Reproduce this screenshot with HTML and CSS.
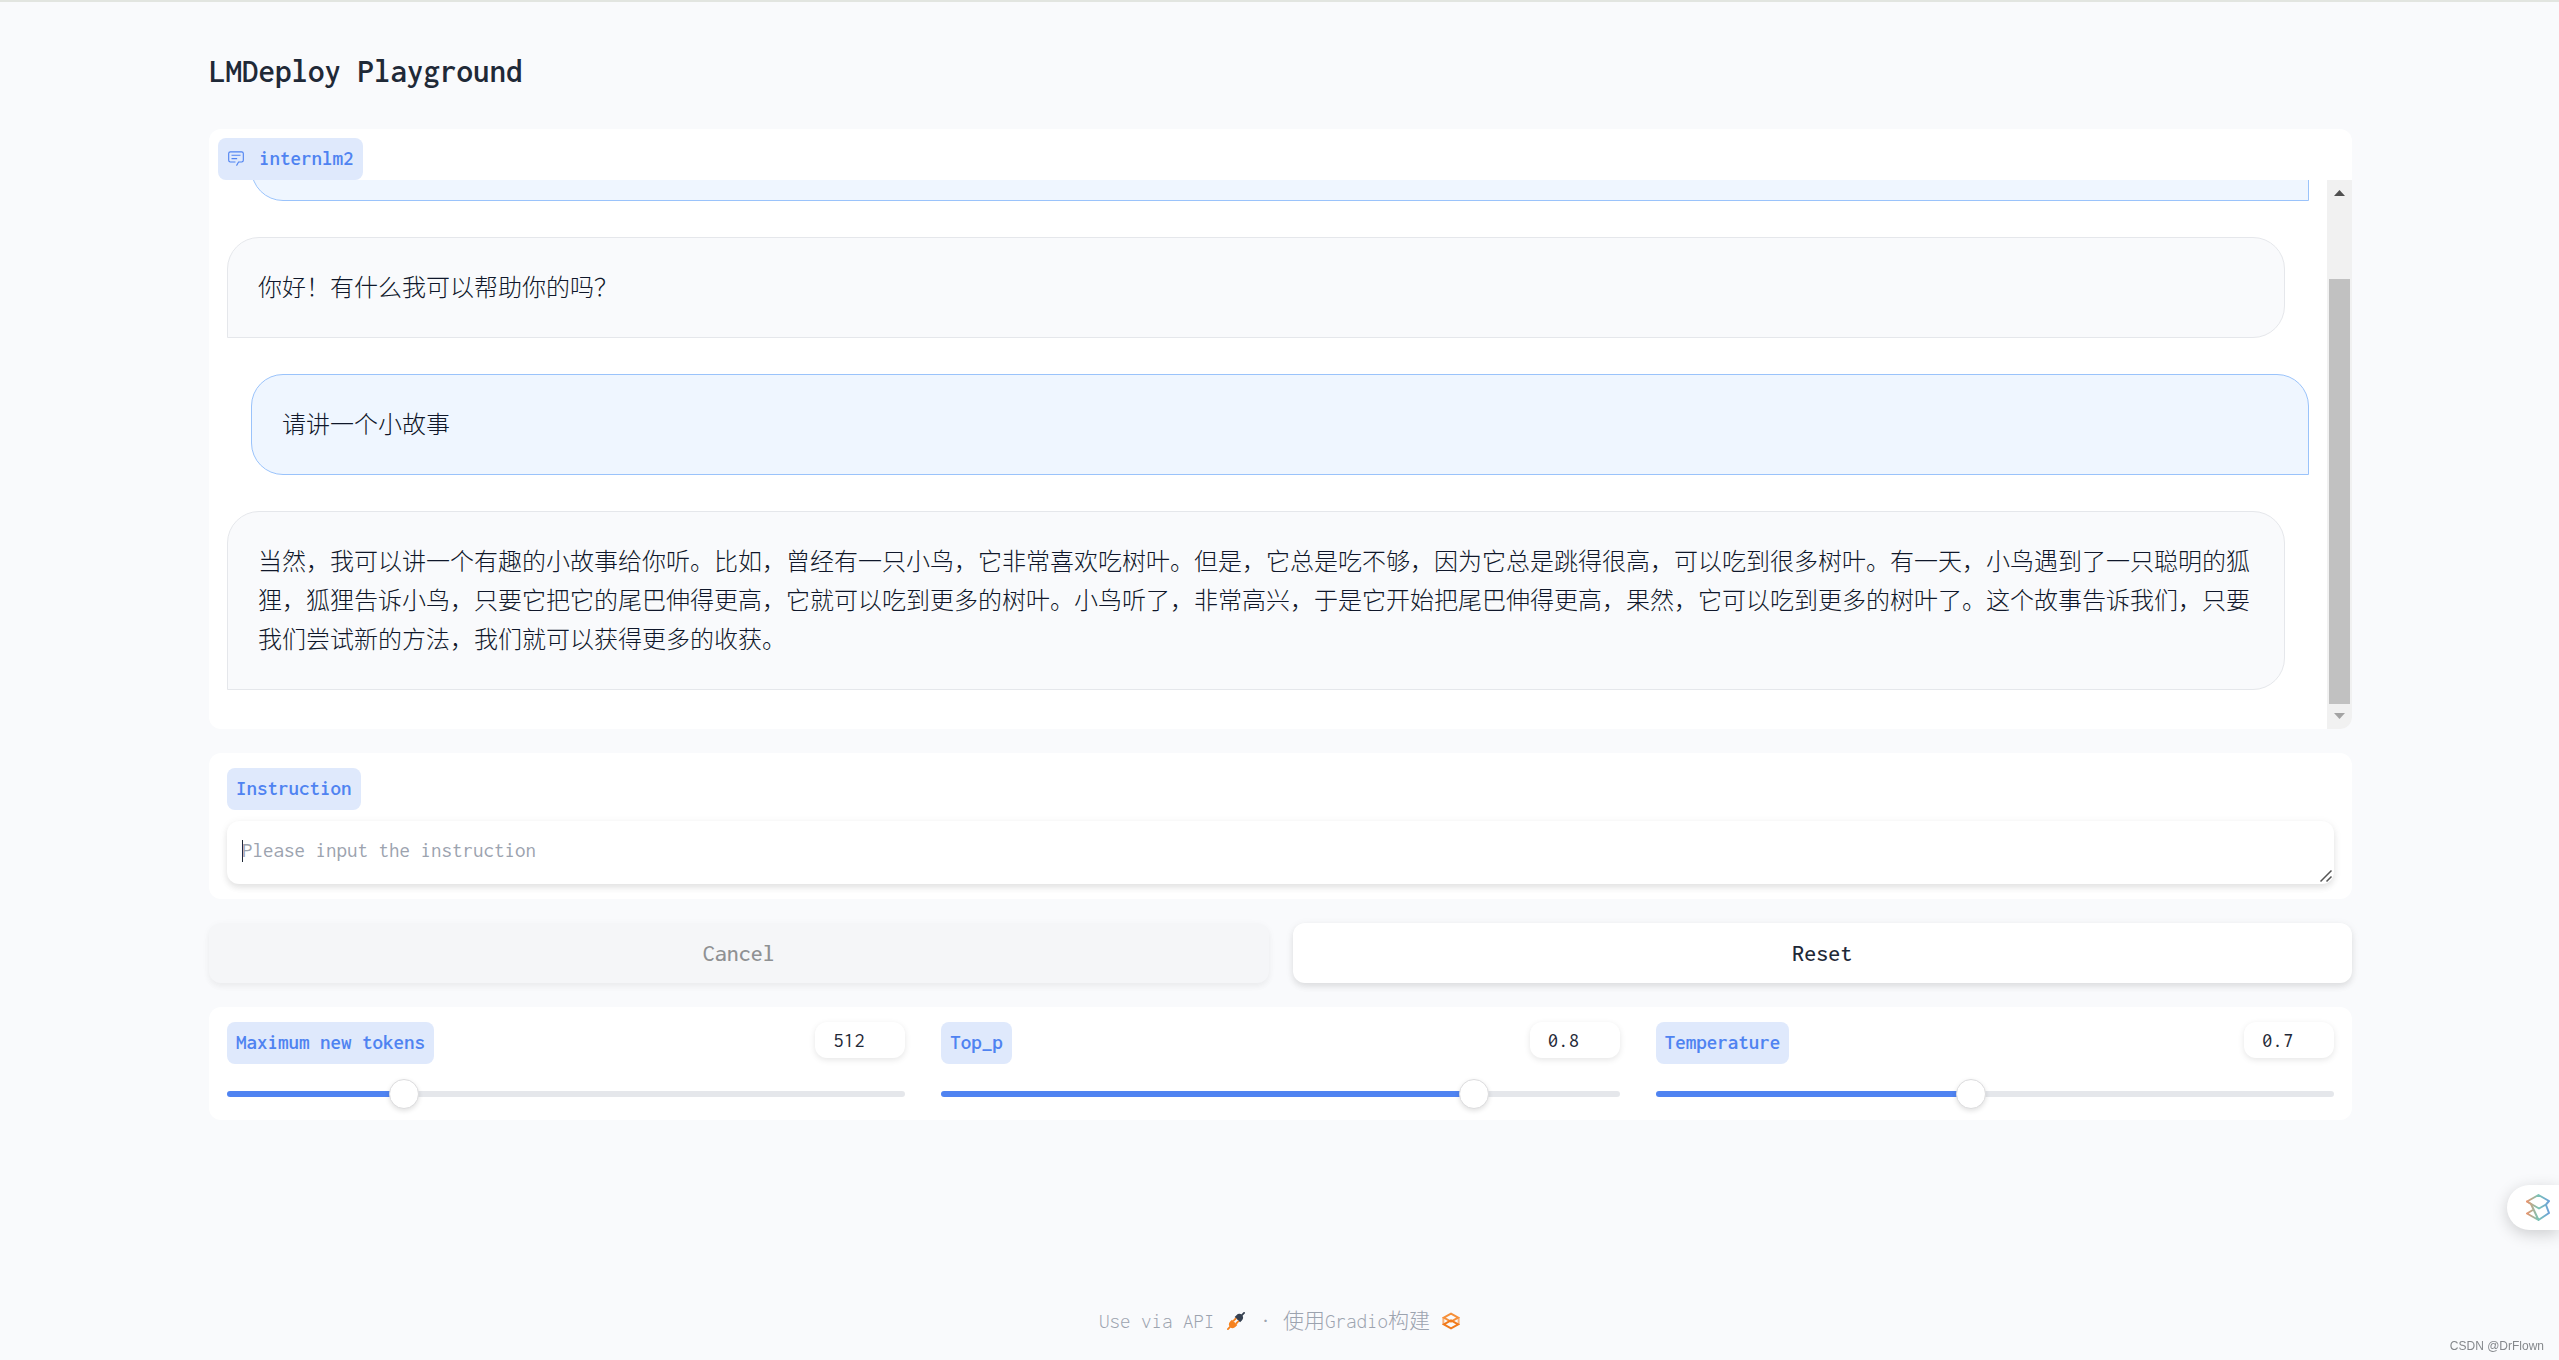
FILE: index.html
```html
<!DOCTYPE html>
<html lang="zh-CN">
<head>
<meta charset="utf-8">
<meta name="viewport" content="width=device-width, initial-scale=1">
<title>LMDeploy Playground</title>
<link rel="stylesheet" href="styles.css">
</head>
<body>
<div class="app">
  <main class="main">
    <h1 class="title">LMDeploy Playground</h1>

    <section class="panel chat">
      <h2 class="chip chat-label">
        <svg class="chat-icon" viewBox="0 0 32 32" fill="currentColor" aria-hidden="true">
          <path d="M17.740 30 16 29l4-7h6a2 2 0 0 0 2-2V8a2 2 0 0 0-2-2H6a2 2 0 0 0-2 2v12a2 2 0 0 0 2 2h9v2H6a4 4 0 0 1-4-4V8a4 4 0 0 1 4-4h20a4 4 0 0 1 4 4v12a4 4 0 0 1-4 4h-4.840z"/>
          <path d="M8 10h16v2H8zM8 16h10v2H8z"/>
        </svg>
        internlm2
      </h2>
      <div class="chat-body">
        <div class="messages">
          <div class="message-list">
            <p class="message user"></p>
            <p class="message bot">你好！有什么我可以帮助你的吗？</p>
            <p class="message user">请讲一个小故事</p>
            <p class="message bot">当然，我可以讲一个有趣的小故事给你听。比如，曾经有一只小鸟，它非常喜欢吃树叶。但是，它总是吃不够，因为它总是跳得很高，可以吃到很多树叶。有一天，小鸟遇到了一只聪明的狐狸，狐狸告诉小鸟，只要它把它的尾巴伸得更高，它就可以吃到更多的树叶。小鸟听了，非常高兴，于是它开始把尾巴伸得更高，果然，它可以吃到更多的树叶了。这个故事告诉我们，只要我们尝试新的方法，我们就可以获得更多的收获。</p>
          </div>
        </div>
        <div class="scrollbar" aria-hidden="true">
          <svg class="scroll-arrow up" viewBox="0 0 11 6"><path d="M0 6 5.500 0 11 6z"/></svg>
          <div class="scroll-thumb"></div>
          <svg class="scroll-arrow down" viewBox="0 0 11 6"><path d="M0 0 5.500 6 11 0z"/></svg>
        </div>
      </div>
    </section>

    <section class="panel instruction">
      <label class="chip" for="instruction">Instruction</label>
      <textarea class="prompt" id="instruction" rows="1" placeholder="Please input the instruction"></textarea>
    </section>

    <div class="actions">
      <button class="button" type="button" disabled>Cancel</button>
      <button class="button" type="button">Reset</button>
    </div>

    <section class="panel settings">
      <div class="setting">
        <div class="setting-head">
          <label class="chip" for="tokens">Maximum new tokens</label>
          <input class="number" type="text" inputmode="numeric" value="512" aria-label="Maximum new tokens value">
        </div>
        <input class="slider" id="tokens" type="range" min="1" max="2048" step="1" value="512" style="--fill: 25%">
      </div>
      <div class="setting">
        <div class="setting-head">
          <label class="chip" for="top-p">Top_p</label>
          <input class="number" type="text" inputmode="decimal" value="0.8" aria-label="Top_p value">
        </div>
        <input class="slider" id="top-p" type="range" min="0.01" max="1" step="0.01" value="0.8" style="--fill: 80%">
      </div>
      <div class="setting">
        <div class="setting-head">
          <label class="chip" for="temperature">Temperature</label>
          <input class="number" type="text" inputmode="decimal" value="0.7" aria-label="Temperature value">
        </div>
        <input class="slider" id="temperature" type="range" min="0.01" max="1.5" step="0.01" value="0.7" style="--fill: 46%">
      </div>
    </section>
  </main>

  <footer class="footer">
    <a class="footer-link" href="#api">Use via API
      <svg class="footer-icon" viewBox="0 0 20 20" aria-hidden="true">
        <path d="M19 1 15.500 4.500" stroke="#374151" stroke-width="2" stroke-linecap="round"/>
        <path d="M8.500 5.500 14.500 11.500 16.500 9.500C18.500 7.500 18.300 5 16.600 3.400 15 1.700 12.500 1.500 10.500 3.500z" fill="#374151"/>
        <path d="M1 19 4.500 15.500M7.500 9.500 9.500 7.500M10.500 12.500 12.500 10.500" stroke="#f6821f" stroke-width="2" stroke-linecap="round"/>
        <path d="M5.500 8.500 11.500 14.500 9.500 16.500C7.500 18.500 5 18.300 3.400 16.600 1.700 15 1.500 12.500 3.500 10.500z" fill="#f6821f"/>
      </svg>
    </a>
    <span class="footer-dot">·</span>
    <a class="footer-link" href="#gradio"><span>使用Gradio构建</span>
      <svg class="footer-icon" viewBox="0 0 20 20" fill="none" stroke-width="2.200" aria-hidden="true">
        <path d="M1.500 6.500V13.500M18.500 6.500V13.500" stroke="#f9b27a"/>
        <path d="M10 1.800 18 6.200 10 10.600 2 6.200z" stroke="#f6903a"/>
        <path d="M10 9.400 18 13.800 10 18.200 2 13.800z" stroke="#f17a1c"/>
      </svg>
    </a>
  </footer>
</div>

<button class="assistant" type="button" aria-label="Assistant">
  <svg class="assistant-icon" viewBox="0 0 24 27" fill="none" stroke="url(#rainbow)" stroke-width="2" stroke-linejoin="round" stroke-linecap="round" aria-hidden="true">
    <defs>
      <linearGradient id="rainbow" gradientUnits="userSpaceOnUse" x1="0" y1="13" x2="24" y2="13">
        <stop offset="0" stop-color="#f0926a"/>
        <stop offset="0.500" stop-color="#7cc4b4"/>
        <stop offset="1" stop-color="#6a9fdc"/>
      </linearGradient>
    </defs>
    <path d="M12.500 1 23 7 20 10.500 13 14.500 1 7.500z"/>
    <path d="M1 7.500 5 10 12.500 26 23 19 20 11M6 16.500 1 19.500 12.500 26"/>
  </svg>
</button>
<span class="watermark">CSDN @DrFlown</span>
</body>
</html>
```
FILE: styles.css
```css
:root {
  --mono: Inconsolata, "Liberation Mono", "Noto Sans CJK SC", monospace;
  --blue: #4f83f1;
  --shadow: 0 2px 8px rgba(0, 0, 0, 0.08), 0 4px 6px rgba(0, 0, 0, 0.06);
}

* {
  box-sizing: border-box;
}

body {
  margin: 0;
  background: #f9fafc;
  color: #1f2937;
  font-family: var(--mono);
  font-size: 21px;
  line-height: 30px;
}

input,
textarea,
button {
  border: 0;
  color: inherit;
  font: inherit;
}

.app {
  display: flex;
  flex-direction: column;
  min-height: 100vh;
  border-top: 2px solid #e2e5e0;
}

.main {
  display: flex;
  flex-direction: column;
  gap: 24px;
  width: 100%;
  max-width: 2305px;
  margin: 0 auto;
  padding: 48px 80px 48px 82px;
}

.title {
  margin: 0 0 12px;
  font-size: 33px;
  font-weight: 600;
  line-height: 43px;
}

.panel {
  border-radius: 12px;
  background: #fff;
}

.chip {
  display: inline-flex;
  align-items: center;
  height: 42px;
  margin: 0;
  padding: 0 9px 2px;
  border-radius: 8px;
  background: #dfe9fc;
  color: var(--blue);
  font-size: 21px;
  font-weight: 600;
}

.chat {
  display: flex;
  flex-direction: column;
  align-items: flex-start;
  padding-top: 9px;
  overflow: hidden;
}

.chat-label {
  gap: 14px;
  margin-left: 9px;
}

.chat-icon {
  width: 18px;
  height: 18px;
}

.chat-body {
  display: flex;
  width: 100%;
  height: 549px;
}

.messages {
  display: flex;
  flex: 1;
  flex-direction: column;
  justify-content: flex-end;
  min-width: 0;
  overflow: hidden;
}

.scrollbar {
  display: flex;
  flex-direction: column;
  align-items: center;
  justify-content: space-between;
  width: 25px;
  padding: 10px 2px;
  background: #f1f1f1;
}

.scroll-arrow {
  width: 11px;
  height: 6px;
}

.up {
  fill: #505050;
}

.down {
  fill: #a3a3a3;
}

.scroll-thumb {
  width: 100%;
  height: 425px;
  margin: auto 0 9px;
  background: #c1c1c1;
}

.message-list {
  display: flex;
  flex-direction: column;
  flex-shrink: 0;
  gap: 36px;
  padding: 16px 18px 39px;
}

.message {
  min-height: 101px;
  margin: 0;
  padding: 28px 30px 32px;
  border: 1px solid;
  border-radius: 32px;
  color: #0f172a;
  font-family: "Noto Sans CJK SC", sans-serif;
  font-size: 24px;
  font-weight: 300;
  line-height: 39px;
}

.user {
  margin-left: 24px;
  border-color: #9ac3fb;
  border-bottom-right-radius: 0;
  background: #eff6ff;
}

.bot {
  margin-right: 24px;
  border-color: #e5e7eb;
  border-bottom-left-radius: 0;
  background: #f9fafc;
}

.instruction {
  display: flex;
  flex-direction: column;
  align-items: flex-start;
  gap: 11px;
  padding: 15px 18px;
}

.prompt {
  width: 100%;
  height: 63px;
  padding: 14px 15px;
  border-radius: 12px;
  outline: 0;
  background: #fff linear-gradient(#1f2937, #1f2937) 15px 19px / 1px 22px no-repeat;
  box-shadow: var(--shadow);
  resize: vertical;
}

.prompt::placeholder {
  color: #9ca3af;
}

.prompt::-webkit-resizer {
  background: url("data:image/svg+xml,%3Csvg xmlns='http://www.w3.org/2000/svg' width='15' height='15'%3E%3Cpath d='M1.500 12.500 12.500 1.500M7.500 12.500 12.500 7.500' stroke='%23555' stroke-width='1.500'/%3E%3C/svg%3E") no-repeat;
}

.actions {
  display: grid;
  grid-template-columns: 1fr 1fr;
  gap: 24px;
}

.button {
  height: 60px;
  border-radius: 12px;
  background: #fff;
  box-shadow: var(--shadow);
  font-size: 24px;
  font-weight: 500;
}

.button:disabled {
  background: #f5f6f8;
  box-shadow: 0 2px 8px rgba(0, 0, 0, 0.04), 0 4px 6px rgba(0, 0, 0, 0.03);
  color: #8f9193;
}

.settings {
  display: grid;
  grid-template-columns: repeat(3, 1fr);
  gap: 36px;
  padding: 15px 18px 11px;
}

.setting-head {
  display: flex;
  align-items: flex-start;
  justify-content: space-between;
}

.number {
  width: 90px;
  height: 36px;
  padding: 0 18px;
  border-radius: 12px;
  outline: 0;
  background: #fff;
  box-shadow: 0 2px 6px rgba(0, 0, 0, 0.1);
}

.slider {
  display: block;
  width: 100%;
  height: 30px;
  margin: 15px 0 0;
  appearance: none;
  background: none;
}

.slider::-webkit-slider-runnable-track {
  height: 6px;
  border-radius: 3px;
  background: linear-gradient(to right, var(--blue) var(--fill), #e5e7eb var(--fill));
}

.slider::-webkit-slider-thumb {
  width: 30px;
  height: 30px;
  margin-top: -12px;
  border: 1px solid #dcdcde;
  border-radius: 50%;
  appearance: none;
  background: #fff;
  box-shadow: 0 2px 5px rgba(0, 0, 0, 0.12);
}

.footer {
  display: flex;
  align-items: center;
  justify-content: center;
  margin-top: auto;
  padding-bottom: 24px;
  color: #9ca3af;
}

.footer-dot {
  padding: 0 12px 0 16px;
}

.footer-link {
  display: flex;
  align-items: center;
  gap: 12px;
  color: inherit;
  font-weight: 300;
  text-decoration: none;
}

.footer-icon {
  width: 18px;
  height: 18px;
}

.assistant {
  position: fixed;
  right: 0;
  bottom: 130px;
  display: flex;
  align-items: center;
  width: 52px;
  height: 45px;
  padding: 0 0 0 19px;
  border-radius: 23px 0 0 23px;
  background: #fff;
  box-shadow: 0 4px 16px rgba(0, 0, 0, 0.18);
}

.assistant-icon {
  width: 24px;
  height: 27px;
}

.watermark {
  position: fixed;
  right: 15px;
  bottom: 5px;
  color: #85888c;
  font: 12px/18px "Liberation Sans", Arial, sans-serif;
}
```
